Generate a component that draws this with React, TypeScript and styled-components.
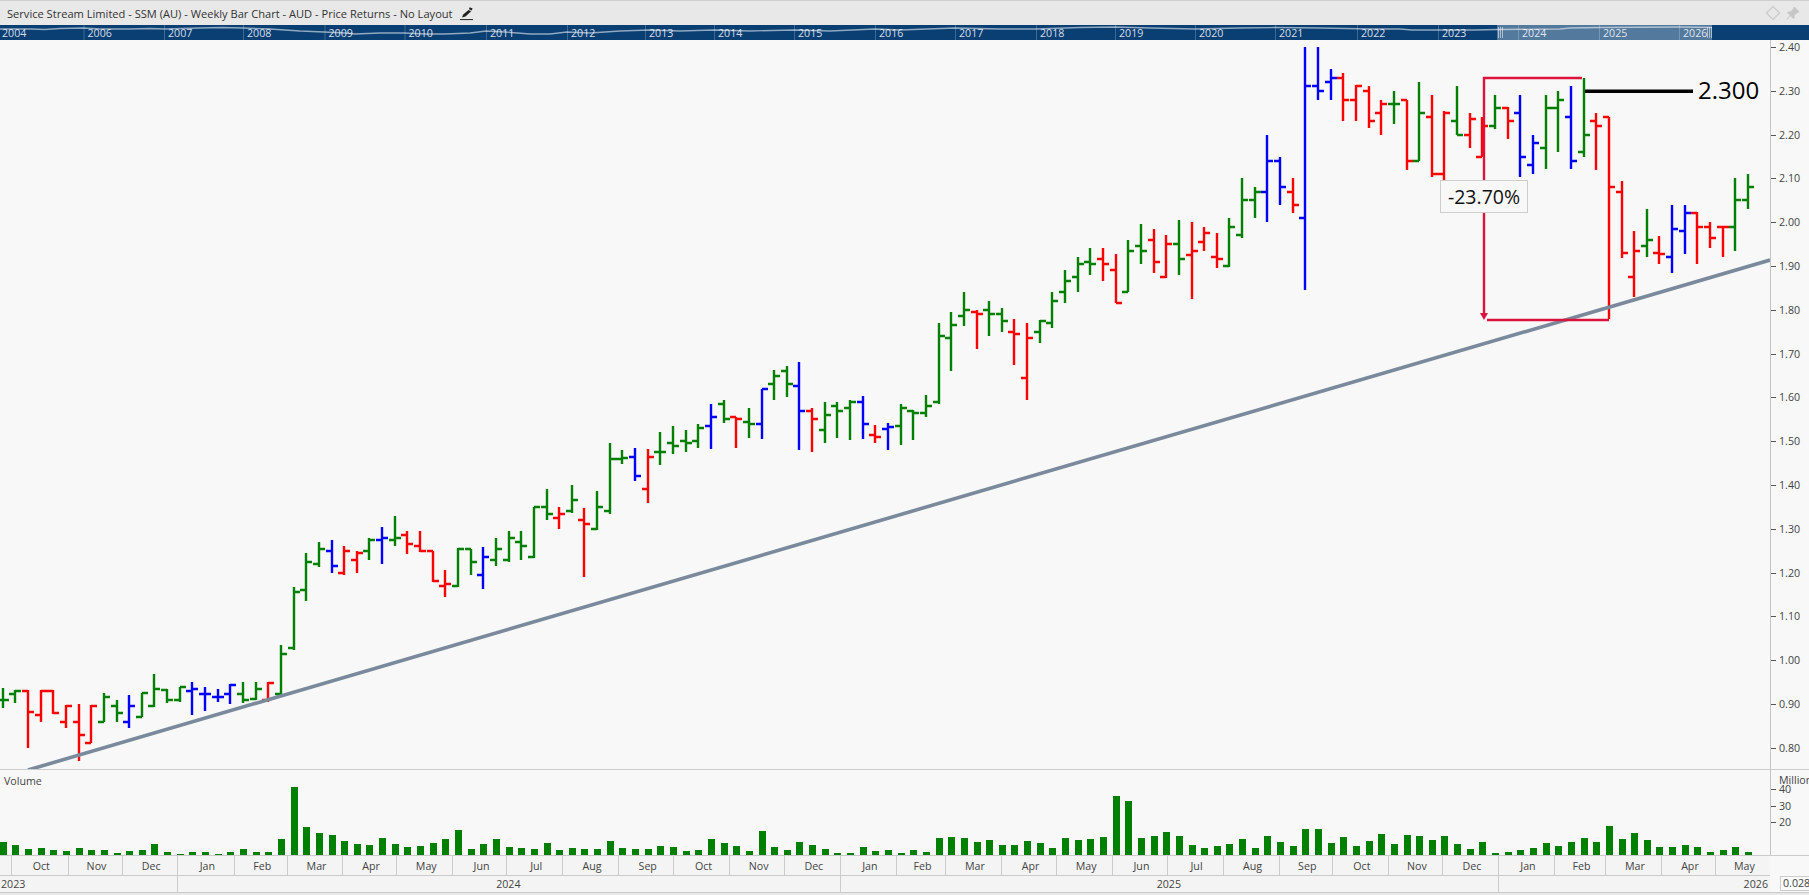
import styled, { createGlobalStyle } from "styled-components";
import { BsPinAngleFill } from "react-icons/bs";

type Bar = [number, number, number, number, "g" | "r" | "b"];

const GlobalStyle = createGlobalStyle`
  html, body {
    margin: 0;
    background: #f8f8f8;
    overflow: hidden;
    font-family: "Open Sans", "Noto Sans", sans-serif;
  }
`;

const Page = styled.div`
  width: 1809px;
  height: 895px;
  display: flex;
  flex-direction: column;
  border-top: 1px solid #cfcfcf;
  box-sizing: border-box;
  background: #f8f8f8;
  overflow: hidden;
`;

const TitleBar = styled.header`
  height: 24px;
  flex: none;
  display: flex;
  align-items: center;
  padding: 0 9px 0 7px;
  background: #e8e8e8;
  color: #333;
  font-size: 11.1px;
`;

const EditIcon = styled.svg`
  width: 15px;
  height: 15px;
  margin-left: 6px;
`;

const TitleTools = styled.div`
  margin-left: auto;
  display: flex;
  align-items: center;
  gap: 4px;
  color: #c6c6c6;
  font-size: 15px;
`;

const Navigator = styled.svg`
  display: block;
  flex: none;
  width: 1809px;
  height: 15px;
  background: #0a3f73;
`;

const NavYear = styled.text`
  fill: #d4dde6;
  font-size: 10.67px;
`;

const PricePane = styled.section`
  position: relative;
  flex: none;
  height: 730px;
  display: flex;
  box-sizing: border-box;
  border-bottom: 1px solid #cbcbcb;
`;

const ChartSvg = styled.svg`
  display: block;
  flex: none;
  width: 1770px;
  height: 100%;
`;

const PriceAxis = styled.div`
  flex: 1;
  padding-top: 7px;
  border-left: 1px solid #c4c4c4;
  color: #444;
  font-size: 10.67px;
`;

const AxisRow = styled.div<{ $h: number }>`
  display: flex;
  height: ${(p) => p.$h}px;
  &::before {
    content: "";
    flex: none;
    width: 5px;
    height: 1px;
    background: #555;
  }
`;

const AxisLabel = styled.span`
  margin: -8px 0 0 3px;
  line-height: 16px;
`;

const PriceFlag = styled.div`
  position: absolute;
  left: 1698px;
  top: 33px;
  color: #000;
  font-size: 24px;
  line-height: 34px;
`;

const PercentBox = styled.div`
  position: absolute;
  left: 1440px;
  top: 140px;
  width: 88px;
  height: 33px;
  box-sizing: border-box;
  display: flex;
  align-items: center;
  justify-content: center;
  border: 1px solid #cdcdcd;
  background: #f8f8f8;
  color: #111;
  font-size: 19.5px;
`;

const VolumePane = styled.section`
  position: relative;
  flex: none;
  height: 86px;
  display: flex;
  box-sizing: border-box;
  border-bottom: 1px solid #cbcbcb;
`;

const VolumeTitle = styled.span`
  position: absolute;
  left: 4px;
  top: 4px;
  color: #444;
  font-size: 10.67px;
`;

const VolumeAxis = styled(PriceAxis)`
  position: relative;
  padding-top: 19px;
  overflow: hidden;
`;

const VolumeUnit = styled.span`
  position: absolute;
  left: 8px;
  top: 3px;
  white-space: nowrap;
`;

const TimeAxis = styled.footer`
  flex: none;
  height: 37px;
  display: flex;
  box-sizing: border-box;
  border-bottom: 1px solid #cbcbcb;
  color: #444;
  font-size: 10.67px;
`;

const TimeRows = styled.div`
  flex: none;
  width: 1770px;
  background: #f4f4f4;
`;

const MonthRow = styled.div`
  display: flex;
  height: 20px;
  box-sizing: border-box;
  border-bottom: 1px solid #cbcbcb;
`;

const YearRow = styled.div`
  display: flex;
  height: 16px;
`;

const TimeCell = styled.div<{ $w: number; $align?: string }>`
  flex: none;
  width: ${(p) => p.$w}px;
  box-sizing: border-box;
  display: flex;
  align-items: center;
  justify-content: ${(p) => p.$align || "center"};
  padding: 0 2px 0 1px;
  border-right: 1px solid #cbcbcb;
  &:last-child {
    border-right: 0;
  }
`;

const MonthCell = styled(TimeCell)`
  padding: 0 0 0 3px;
`;

const ScaleCell = styled.div`
  flex: 1;
  padding: 20px 0 0 10px;
  overflow: hidden;
`;

const ScaleBox = styled.div`
  width: 40px;
  height: 15px;
  box-sizing: border-box;
  padding-left: 2px;
  line-height: 13px;
  border: 1px solid #cdcdcd;
  background: #fafafa;
`;

const Bottom = styled.div`
  flex: 1;
  background: #e8e8e8;
`;

const bars: Bar[] = [
  [700,688,708,700,"g"],[694,690,703,691,"g"],[691,690,748,712,"r"],[715,690,722,691,"r"],[691,690,714,713,"r"],
  [722,705,728,706,"r"],[722,704,761,735,"r"],[743,705,743,706,"r"],[722,693,722,697,"g"],[706,700,722,713,"g"],
  [722,695,728,706,"b"],[717,693,717,693,"g"],[706,674,707,689,"g"],[690,689,703,700,"g"],[700,687,702,687,"g"],
  [691,682,715,689,"b"],[694,687,711,694,"b"],[697,689,702,697,"b"],[694,684,704,685,"b"],[694,682,703,700,"g"],
  [699,682,700,689,"g"],[700,682,702,683,"r"],[694,645,694,654,"g"],[648,587,650,592,"g"],[590,553,601,562,"g"],
  [564,542,567,549,"g"],[551,540,573,566,"b"],[573,546,575,551,"r"],[560,551,573,553,"r"],[551,538,560,540,"g"],
  [540,527,564,538,"b"],[540,516,546,538,"g"],[535,531,554,544,"r"],[546,531,552,551,"r"],[551,551,582,581,"r"],
  [586,570,597,584,"r"],[586,548,587,549,"g"],[549,549,575,562,"g"],[575,547,589,557,"b"],[560,538,566,549,"g"],
  [560,531,562,538,"g"],[542,531,560,546,"g"],[557,507,558,507,"g"],[507,489,520,514,"g"],[518,507,529,514,"r"],
  [511,485,513,500,"g"],[520,508,577,524,"r"],[529,491,530,507,"g"],[511,443,514,459,"g"],[459,450,464,458,"g"],
  [457,448,481,476,"b"],[489,449,503,457,"r"],[452,432,465,452,"g"],[443,426,454,446,"g"],[441,430,452,443,"g"],
  [441,424,448,428,"g"],[426,404,449,417,"b"],[404,400,423,419,"g"],[417,417,448,419,"r"],[422,408,438,424,"g"],
  [424,389,439,389,"b"],[384,370,400,376,"g"],[371,366,397,384,"g"],[386,362,450,411,"b"],[411,408,452,419,"r"],
  [430,402,443,415,"g"],[406,402,438,411,"g"],[408,400,440,402,"g"],[402,396,439,424,"b"],[435,425,443,437,"r"],
  [429,423,450,427,"b"],[426,404,445,408,"g"],[411,410,440,413,"g"],[413,395,417,406,"g"],[402,323,404,336,"g"],
  [338,312,371,325,"g"],[316,292,326,310,"g"],[312,310,349,314,"r"],[310,301,336,314,"g"],[314,308,332,321,"g"],
  [332,319,365,334,"r"],[378,323,400,338,"r"],[332,320,343,321,"g"],[323,292,328,301,"g"],[292,270,303,281,"g"],
  [277,257,292,264,"g"],[262,248,275,264,"g"],[259,248,281,264,"r"],[270,254,303,303,"r"],[292,240,292,251,"g"],
  [246,224,264,251,"g"],[240,229,273,262,"r"],[277,235,278,244,"r"],[244,220,275,259,"g"],[255,222,299,251,"r"],
  [242,227,251,233,"r"],[257,233,268,259,"r"],[266,218,267,227,"g"],[235,178,238,200,"g"],[200,187,218,192,"g"],
  [192,135,222,161,"b"],[161,157,205,187,"b"],[192,178,213,205,"r"],[218,47,290,86,"b"],[86,47,100,91,"b"],
  [82,69,100,78,"b"],[78,73,121,100,"r"],[100,85,121,86,"r"],[91,86,128,121,"r"],[113,100,135,104,"r"],
  [104,91,124,104,"g"],[100,100,170,161,"r"],[161,82,161,113,"g"],[117,95,177,174,"r"],[174,111,180,113,"r"],
  [121,86,135,135,"g"],[135,113,148,119,"r"],[157,117,157,126,"r"],[126,95,129,108,"g"],[108,107,139,121,"r"],
  [113,95,177,157,"b"],[165,135,174,143,"b"],[148,95,169,108,"g"],[108,91,152,100,"g"],[117,86,169,161,"b"],
  [152,78,157,135,"g"],[121,113,170,126,"r"],[117,117,319,187,"r"],[192,181,258,253,"r"],[277,231,297,251,"r"],
  [246,209,257,240,"g"],[253,236,264,254,"r"],[257,205,273,229,"b"],[231,205,254,213,"b"],[213,212,264,227,"r"],
  [227,222,248,238,"r"],[227,227,257,227,"r"],[227,178,251,200,"g"],[200,174,209,187,"g"],
];

const volumes = [
  13,10,6,7,5,4,7,5,5,2,4,5,11,3,1,3,3,1,3,6,3,3,16,68,28,22,20,14,11,10,17,11,8,9,12,16,25,6,11,16,8,7,6,12,5,7,6,6,
  14,7,6,6,9,8,4,5,16,12,9,4,24,8,5,13,10,6,2,2,8,4,5,2,5,3,17,18,17,13,15,10,10,14,12,7,17,15,16,18,59,54,17,19,23,19,10,7,9,11,16,7,19,13,9,
  26,26,12,18,9,14,21,11,20,19,15,19,11,6,13,2,3,5,7,12,9,13,17,13,29,16,22,15,8,8,10,8,3,5,8,3,
];

const colors = { g: "#008000", r: "#ff0000", b: "#0000ff" };
const barX = (i: number) => Math.round(2.7 + 12.647 * i);

const prices = ["2.40","2.30","2.20","2.10","2.00","1.90","1.80","1.70","1.60","1.50","1.40","1.30","1.20","1.10","1.00","0.90","0.80"];

const navYears: [string, number][] = [
  ["2004",-2],["2006",83.5],["2007",164],["2008",243],["2009",324.5],["2010",404.5],["2011",486],["2012",567],["2013",645],
  ["2014",714],["2015",794],["2016",875],["2017",955],["2018",1036],["2019",1115],["2020",1195],["2021",1275],["2022",1357],
  ["2023",1438],["2024",1518],["2025",1599],["2026",1679],
];

const navLine =
  "0,29 30,29 45,29.5 60,28.5 83,28 100,29 130,29 150,28.5 165,29 200,28 222,27.5 243,28 270,29 300,31 324,32 345,33 355,34 380,33 404,33 425,34 445,34 470,33 486,31 505,32 530,34 550,34 567,32 590,33 620,31 650,30 680,31 714,30 750,31 794,30 830,31 875,29 900,30 955,28 1000,29 1036,29 1080,27.5 1115,27 1150,28 1195,29 1240,28 1275,27.5 1320,28 1370,29 1400,29 1412,30 1475,30 1497,29.5 1560,29 1570,28 1600,27.5 1680,27 1712,27.5";

const monthEdges: [string, number][] = [
  ["",12],["Oct",68.5],["Nov",122.5],["Dec",178],["Jan",234.6],["Feb",288],["Mar",343],["Apr",397],["May",453.5],["Jun",507.5],["Jul",563],
  ["Aug",619],["Sep",674.5],["Oct",730.5],["Nov",785],["Dec",840.7],["Jan",897],["Feb",946],["Mar",1002],["Apr",1057],["May",1113.4],
  ["Jun",1167.6],["Jul",1223.6],["Aug",1279.6],["Sep",1333],["Oct",1389],["Nov",1443],["Dec",1499],["Jan",1555],["Feb",1606],["Mar",1662],["Apr",1716],["May",1770],
];

const yearCells: [string, number, string][] = [
  ["2023",178,"flex-start"],["2024",662.7,"center"],["2025",658.3,"center"],["2026",271,"flex-end"],
];

function PriceBar({ bar, i }: { bar: Bar; i: number }) {
  const [o, h, l, c, col] = bar;
  const x = barX(i);
  return (
    <path
      d={`M${x} ${h}V${l}M${x - 6} ${o}H${x}M${x} ${c}H${x + 6}`}
      stroke={colors[col]}
      strokeWidth="2.4"
      fill="none"
    />
  );
}

export default function App() {
  return (
    <Page>
      <GlobalStyle />
      <TitleBar>
        Service Stream Limited - SSM (AU) - Weekly Bar Chart - AUD - Price Returns - No Layout
        <EditIcon viewBox="0 0 15 15">
          <path d="M10.6 1.2 13.6 2.4 12.7 4.4 10 3.2zM9.5 4 12.2 5.2 6.5 10.4 3 11.6 4.2 8.6z" fill="#222" />
          <path d="M1 13.6H14" stroke="#222" strokeWidth="1" />
        </EditIcon>
        <TitleTools>
          <svg width="16" height="16" viewBox="0 0 16 16">
            <path d="M8 1.5 14.5 8 8 14.5 1.5 8z" fill="none" stroke="#cdcdcd" strokeWidth="1.4" />
          </svg>
          <BsPinAngleFill />
        </TitleTools>
      </TitleBar>

      <Navigator viewBox="0 25 1809 15">
        {navYears.map(([y, x]) => (
          <g key={y}>
            <rect x={x} y="25" width="1" height="15" fill="rgba(255,255,255,0.22)" />
            <NavYear x={x + 4} y="37">{y}</NavYear>
          </g>
        ))}
        <polyline points={navLine} fill="none" stroke="rgba(255,255,255,0.55)" strokeWidth="1.3" />
        <rect x="1497" y="25" width="215" height="15" fill="rgba(255,255,255,0.3)" />
        {[1498, 1500, 1502, 1707, 1709, 1711].map((x) => (
          <rect key={x} x={x} y="27" width="1" height="11" fill="rgba(255,255,255,0.5)" />
        ))}
      </Navigator>

      <PricePane>
        <ChartSvg viewBox="0 40 1770 729">
          {bars.map((b, i) => (
            <PriceBar key={i} bar={b} i={i} />
          ))}
          <line x1="28" y1="770" x2="1770" y2="260" stroke="#7a8a9c" strokeWidth="3.6" />
          <g fill="none" stroke="#dc143c" strokeWidth="2.4">
            <path d="M1582 78H1484V314" />
            <path d="M1487 320H1609" />
          </g>
          <path d="M1480 313H1488L1484 320z" fill="#dc143c" />
          <rect x="1585" y="89.5" width="108" height="3.5" fill="#000" />
        </ChartSvg>
        <PriceAxis>
          {prices.map((p) => (
            <AxisRow key={p} $h={43.8}>
              <AxisLabel>{p}</AxisLabel>
            </AxisRow>
          ))}
        </PriceAxis>
        <PriceFlag>2.300</PriceFlag>
        <PercentBox>-23.70%</PercentBox>
      </PricePane>

      <VolumePane>
        <VolumeTitle>Volume</VolumeTitle>
        <ChartSvg viewBox="0 770 1770 85">
          <g shapeRendering="crispEdges" fill="#008000">
            {volumes.map((v, i) => (
              <rect key={i} x={barX(i) - 3} y={855 - v} width="7" height={v} />
            ))}
          </g>
        </ChartSvg>
        <VolumeAxis>
          {["40", "30", "20"].map((v) => (
            <AxisRow key={v} $h={16.5}>
              <AxisLabel>{v}</AxisLabel>
            </AxisRow>
          ))}
          <VolumeUnit>Millions</VolumeUnit>
        </VolumeAxis>
      </VolumePane>

      <TimeAxis>
        <TimeRows>
          <MonthRow>
            {monthEdges.map(([m, edge], i) => (
              <MonthCell key={i} $w={edge - (i ? monthEdges[i - 1][1] : 0)}>
                {m}
              </MonthCell>
            ))}
          </MonthRow>
          <YearRow>
            {yearCells.map(([y, w, align]) => (
              <TimeCell key={y} $w={w} $align={align}>
                {y}
              </TimeCell>
            ))}
          </YearRow>
        </TimeRows>
        <ScaleCell>
          <ScaleBox>0.028</ScaleBox>
        </ScaleCell>
      </TimeAxis>
      <Bottom />
    </Page>
  );
}
